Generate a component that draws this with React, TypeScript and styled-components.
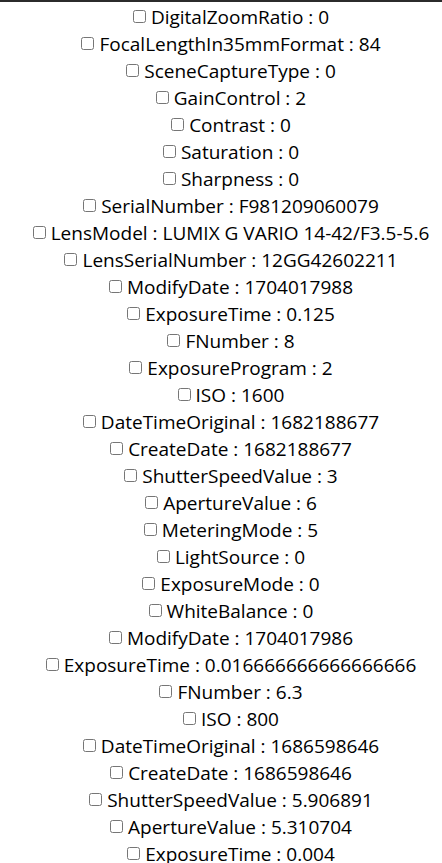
import styled, { createGlobalStyle } from 'styled-components';

const GlobalStyle = createGlobalStyle`
  html, body {
    margin: 0;
    padding: 0;
    background: #ffffff;
  }
  body {
    font-family: "Open Sans", "Noto Sans", "DejaVu Sans", sans-serif;
    color: #000000;
  }
`;

const Page = styled.div`
  border-top: 2px solid #2b2b2b;
  padding: 1px 0 0 20px;
  display: flex;
  flex-direction: column;
  align-items: center;
`;

const Row = styled.label`
  display: flex;
  align-items: center;
  justify-content: center;
  height: 27px;
  font-size: 19px;
  white-space: nowrap;
`;

const Box = styled.input`
  width: 13px;
  height: 13px;
  margin: 0 5px 0 0;
`;

const tags: [string, string][] = [
  ['DigitalZoomRatio', '0'],
  ['FocalLengthIn35mmFormat', '84'],
  ['SceneCaptureType', '0'],
  ['GainControl', '2'],
  ['Contrast', '0'],
  ['Saturation', '0'],
  ['Sharpness', '0'],
  ['SerialNumber', 'F981209060079'],
  ['LensModel', 'LUMIX G VARIO 14-42/F3.5-5.6'],
  ['LensSerialNumber', '12GG42602211'],
  ['ModifyDate', '1704017988'],
  ['ExposureTime', '0.125'],
  ['FNumber', '8'],
  ['ExposureProgram', '2'],
  ['ISO', '1600'],
  ['DateTimeOriginal', '1682188677'],
  ['CreateDate', '1682188677'],
  ['ShutterSpeedValue', '3'],
  ['ApertureValue', '6'],
  ['MeteringMode', '5'],
  ['LightSource', '0'],
  ['ExposureMode', '0'],
  ['WhiteBalance', '0'],
  ['ModifyDate', '1704017986'],
  ['ExposureTime', '0.016666666666666666'],
  ['FNumber', '6.3'],
  ['ISO', '800'],
  ['DateTimeOriginal', '1686598646'],
  ['CreateDate', '1686598646'],
  ['ShutterSpeedValue', '5.906891'],
  ['ApertureValue', '5.310704'],
  ['ExposureTime', '0.004'],
];

export default function App() {
  return (
    <>
      <GlobalStyle />
      <Page>
        {tags.map(([k, v], i) => (
          <Row key={i}>
            <Box type="checkbox" />
            {k} : {v}
          </Row>
        ))}
      </Page>
    </>
  );
}
